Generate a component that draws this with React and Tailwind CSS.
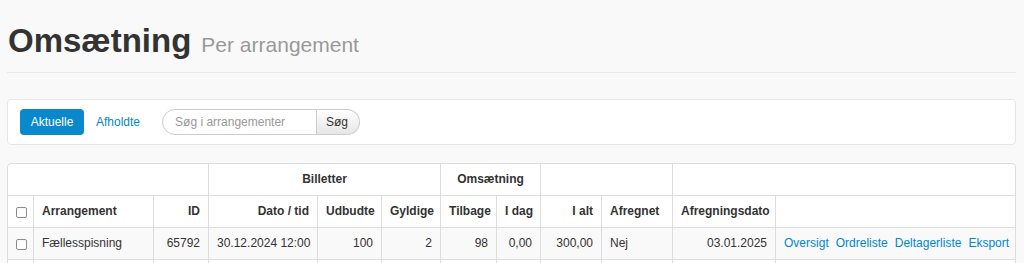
const cols = [
  { w: 'w-[25px]' },
  { w: 'w-[120px]' },
  { w: 'w-[55px]' },
  { w: 'w-[109px]' },
  { w: 'w-[64px]' },
  { w: 'w-[59px]' },
  { w: 'w-[56px]' },
  { w: 'w-[44px]' },
  { w: 'w-[61px]' },
  { w: 'w-[71px]' },
  { w: 'w-[103px]' },
  { w: 'w-[240px]' },
];

const cell = 'px-[8px] py-[6px] leading-[19px] border-[#dddddd] whitespace-nowrap';

function Checkbox() {
  return (
    <div className="w-[11px] h-[11px] mt-[5px] border border-[#8c8c8c] rounded-[2px] bg-white" />
  );
}

const rows = [
  {
    name: 'Fællesspisning',
    id: '65792',
    date: '30.12.2024 12:00',
    offered: '100',
    valid: '2',
    back: '98',
    today: '0,00',
    total: '300,00',
    settled: 'Nej',
    settleDate: '03.01.2025',
  },
];

export default function App() {
  return (
    <div className="h-screen overflow-hidden bg-[#f9f9f9] text-[#333333] font-['Liberation_Sans',Arial,sans-serif] text-[12px]">
      <div className="ml-[7px] w-[1009px] pt-[21px]">
        {/* Title */}
        <div className="pb-[11px] border-b border-[#e8e8e8] flex items-baseline">
          <h1 className="text-[33px] leading-[40px] font-bold text-[#333333] ml-[1px]">Omsætning</h1>
          <span className="ml-[10px] text-[21px] text-[#999999]">Per arrangement</span>
        </div>

        {/* Toolbar */}
        <div className="mt-[26px] h-[46px] bg-white border border-[#e6e6e6] rounded-[4px] px-[12px] flex items-center">
          <button className="h-[26px] w-[64px] rounded-[4px] bg-[#0a88cc] text-white text-[12px]">Aktuelle</button>
          <a className="ml-[12px] text-[#0088cc] text-[12px]">Afholdte</a>
          <div className="ml-[22px] flex h-[26px]">
            <div className="w-[155px] h-full border border-[#cccccc] rounded-l-full bg-white pl-[12px] flex items-center text-[#999999]">
              Søg i arrangementer
            </div>
            <button className="w-[43px] h-full border border-l-0 border-[#cccccc] rounded-r-full bg-gradient-to-b from-white to-[#e6e6e6] text-[#333333] text-[12px] pr-[2px]">
              Søg
            </button>
          </div>
        </div>

        {/* Table */}
        <table className="mt-[18px] w-full table-fixed border-separate border-spacing-0 border border-[#dddddd] rounded-[4px] bg-white">
          <colgroup>
            {cols.map((c, i) => (
              <col key={i} className={c.w} />
            ))}
          </colgroup>
          <thead>
            <tr className="font-bold">
              <th colSpan={3} className={cell}></th>
              <th colSpan={3} className={`${cell} border-l text-center`}>Billetter</th>
              <th colSpan={2} className={`${cell} border-l text-center`}>Omsætning</th>
              <th colSpan={2} className={`${cell} border-l`}></th>
              <th colSpan={2} className={`${cell} border-l`}></th>
            </tr>
            <tr className="font-bold">
              <th className={`${cell} border-t pr-0 align-top`}><Checkbox /></th>
              <th className={`${cell} border-t border-l text-left`}>Arrangement</th>
              <th className={`${cell} border-t border-l text-right`}>ID</th>
              <th className={`${cell} border-t border-l text-right`}>Dato / tid</th>
              <th className={`${cell} border-t border-l text-right`}>Udbudte</th>
              <th className={`${cell} border-t border-l text-right`}>Gyldige</th>
              <th className={`${cell} border-t border-l text-right`}>Tilbage</th>
              <th className={`${cell} border-t border-l text-right`}>I dag</th>
              <th className={`${cell} border-t border-l text-right`}>I alt</th>
              <th className={`${cell} border-t border-l text-left`}>Afregnet</th>
              <th className={`${cell} border-t border-l text-left`}>Afregningsdato</th>
              <th className={`${cell} border-t border-l`}></th>
            </tr>
          </thead>
          <tbody>
            {rows.map((r) => (
              <tr key={r.id} className="bg-[#f9f9f9]">
                <td className={`${cell} border-t pr-0 align-top`}><Checkbox /></td>
                <td className={`${cell} border-t border-l`}>{r.name}</td>
                <td className={`${cell} border-t border-l text-right`}>{r.id}</td>
                <td className={`${cell} border-t border-l text-right`}>{r.date}</td>
                <td className={`${cell} border-t border-l text-right`}>{r.offered}</td>
                <td className={`${cell} border-t border-l text-right`}>{r.valid}</td>
                <td className={`${cell} border-t border-l text-right`}>{r.back}</td>
                <td className={`${cell} border-t border-l text-right`}>{r.today}</td>
                <td className={`${cell} border-t border-l text-right`}>{r.total}</td>
                <td className={`${cell} border-t border-l`}>{r.settled}</td>
                <td className={`${cell} border-t border-l text-right`}>{r.settleDate}</td>
                <td className={`${cell} border-t border-l text-[#0088cc]`}>
                  <div className="flex gap-[7px]">
                    <a>Oversigt</a>
                    <a>Ordreliste</a>
                    <a>Deltagerliste</a>
                    <a>Eksport</a>
                  </div>
                </td>
              </tr>
            ))}
            <tr>
              {cols.map((c, i) => (
                <td key={i} className={`${cell} border-t ${i > 0 ? 'border-l' : ''}`}>&nbsp;</td>
              ))}
            </tr>
          </tbody>
        </table>
      </div>
    </div>
  );
}
